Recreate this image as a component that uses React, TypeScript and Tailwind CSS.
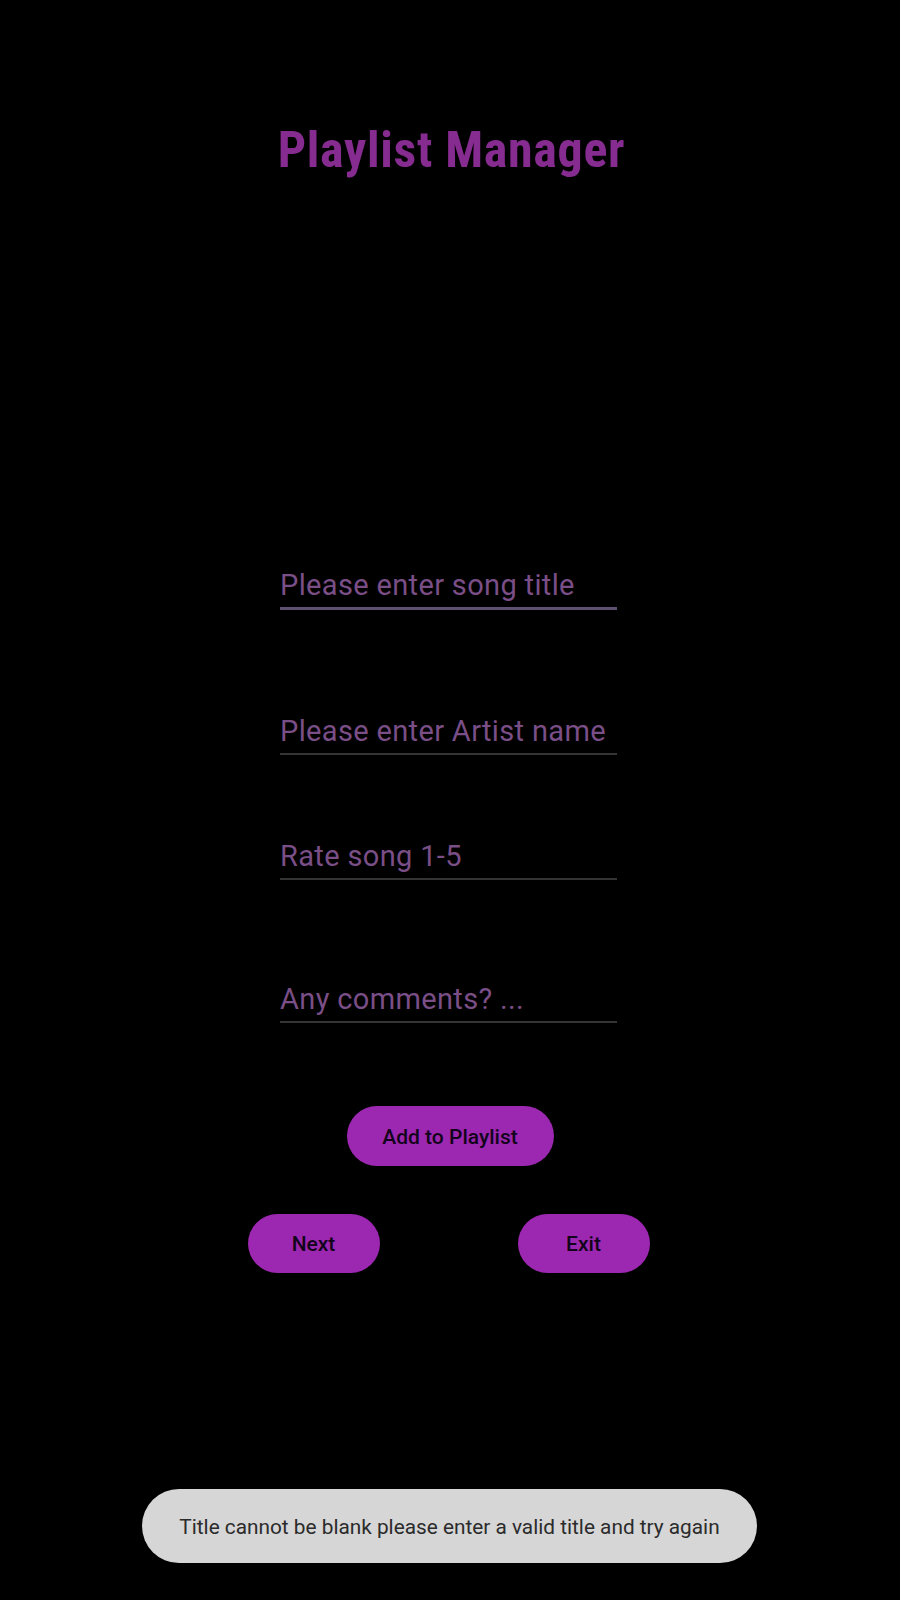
import React from "react";

function Field({ text, focused }: { text: string; focused?: boolean }) {
  return (
    <div
      className={
        "w-[337px] pb-[6px] " +
        (focused ? "border-b-[3px] border-[#5d5070]" : "border-b-[2px] border-[#343434]")
      }
    >
      <div className="text-[29px] leading-[32px] tracking-[0.35px] text-[#7a4e86]">{text}</div>
    </div>
  );
}

export default function App() {
  return (
    <div
      className="relative w-[900px] min-h-[1600px] bg-black flex flex-col items-center"
      style={{ fontFamily: "Roboto, 'Noto Sans', sans-serif" }}
    >
      <h1 className="mt-[122px] text-[50px] leading-[56px] tracking-[0.7px] font-bold text-[#862b8f] font-stretch-condensed pl-[3px]">
        Playlist Manager
      </h1>

      <div className="mt-[391px] flex flex-col items-center pr-[3px]">
        <Field text="Please enter song title" focused />
        <div className="mt-[105px]">
          <Field text="Please enter Artist name" />
        </div>
        <div className="mt-[85px]">
          <Field text="Rate song 1-5" />
        </div>
        <div className="mt-[103px]">
          <Field text="Any comments? ..." />
        </div>
      </div>

      <button className="mt-[83px] w-[207px] h-[60px] pt-[3px] rounded-full bg-[#9c27b0] text-[#12041a] text-[21px] font-medium">
        Add to Playlist
      </button>

      <div className="mt-[48px] flex gap-[138px] pr-[3px]">
        <button className="w-[132px] h-[59px] pt-[3px] rounded-full bg-[#9c27b0] text-[#12041a] text-[21px] font-medium">
          Next
        </button>
        <button className="w-[132px] h-[59px] pt-[3px] rounded-full bg-[#9c27b0] text-[#12041a] text-[21px] font-medium">
          Exit
        </button>
      </div>

      <div className="absolute left-[142px] top-[1489px] w-[615px] h-[74px] pt-[3px] rounded-[37px] bg-[#d6d6d6] flex items-center justify-center">
        <span className="text-[20.8px] text-[#2b2b2b]">
          Title cannot be blank please enter a valid title and try again
        </span>
      </div>
    </div>
  );
}
